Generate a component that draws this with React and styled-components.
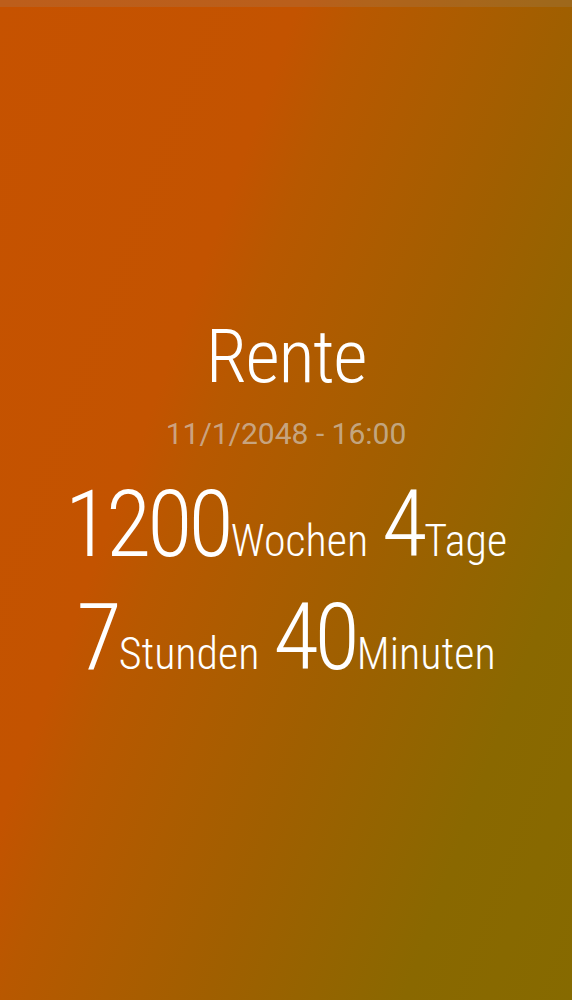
import React from "react"
import styled, { createGlobalStyle } from "styled-components"

const GlobalStyle = createGlobalStyle`
    html, body {
        margin: 0;
        padding: 0;
    }
    body {
        font-family: Roboto, "Noto Sans", sans-serif;
    }
`

const Screen = styled.main`
    position: relative;
    min-height: 100vh;
    display: flex;
    flex-direction: column;
    align-items: center;
    justify-content: center;
    background: linear-gradient(
        110deg,
        #c65200 0%,
        #c35300 32%,
        #b85800 39%,
        #ac5c00 50%,
        #a05f00 61%,
        #8a6800 82%,
        #866a00 100%
    );
    color: #fff;
    font-weight: 300;
    font-stretch: 75%;
`

const StatusBar = styled.div`
    position: absolute;
    top: 0;
    left: 0;
    right: 0;
    height: 7px;
    background: rgba(150, 150, 150, 0.18);
`

const Title = styled.h1`
    margin: 0;
    font-size: 75px;
    font-weight: 300;
    line-height: 80px;
    letter-spacing: -1.5px;
`

const DateLine = styled.div`
    margin-top: 18px;
    font-size: 30px;
    font-weight: 400;
    font-stretch: 100%;
    line-height: 40px;
    color: rgba(215, 215, 215, 0.62);
`

const CountRow = styled.div`
    display: flex;
    align-items: baseline;
    margin-top: ${(p) => p.gap}px;
`

const Value = styled.span`
    font-size: 93px;
    line-height: 1;
    letter-spacing: -4px;
`

const Unit = styled.span`
    font-size: 44px;
    line-height: 1;
    margin-left: 1px;
    margin-right: ${(p) => (p.last ? "0" : "14px")};
`

function App() {
    const rows = [
        [["1200", "Wochen"], ["4", "Tage"]],
        [["7", "Stunden"], ["40", "Minuten"]],
    ]

    return (
        <>
            <GlobalStyle />
            <Screen>
                <StatusBar />
                <Title>Rente</Title>
                <DateLine>11/1/2048 - 16:00</DateLine>
                {rows.map((row, i) => (
                    <CountRow key={i} gap={i === 0 ? 24 : 20}>
                        {row.map(([num, unit], j) => (
                            <React.Fragment key={unit}>
                                <Value>{num}</Value>
                                <Unit last={j === row.length - 1}>{unit}</Unit>
                            </React.Fragment>
                        ))}
                    </CountRow>
                ))}
            </Screen>
        </>
    )
}

export default App
